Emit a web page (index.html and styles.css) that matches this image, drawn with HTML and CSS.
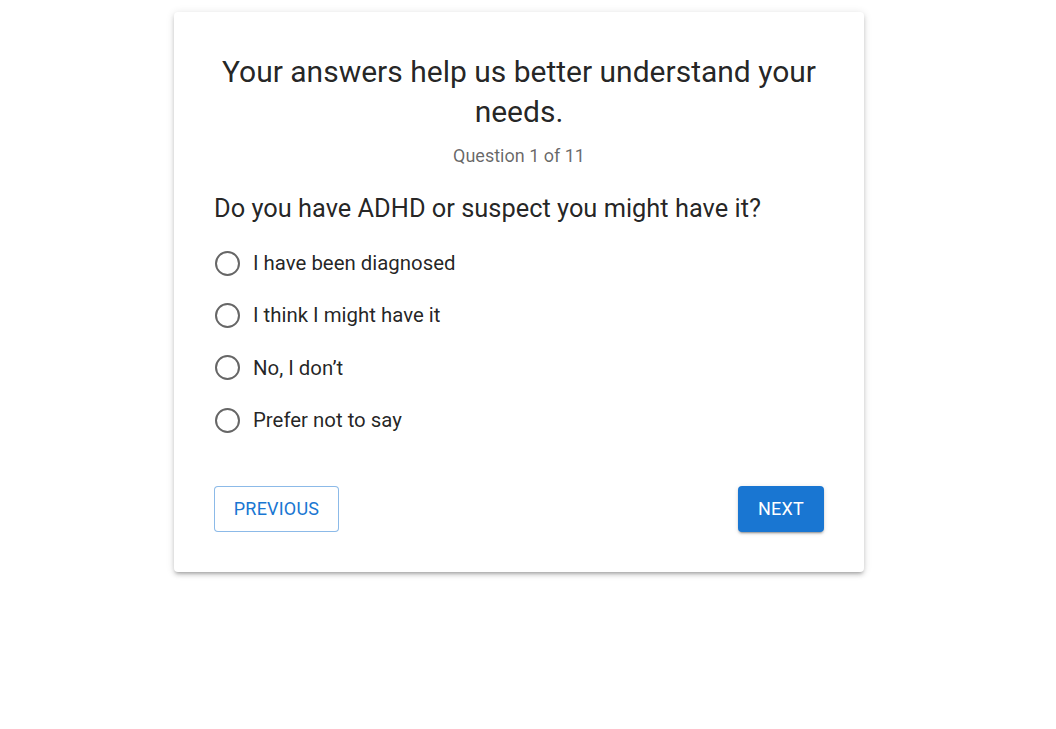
FILE: index.html
```html
<!DOCTYPE html>
<html>
<head>
<meta charset="utf-8">
<link rel="stylesheet" href="styles.css">
</head>
<body>
<div class="page">
  <div class="card">
    <h1 class="title">Your answers help us better understand your needs.</h1>
    <div class="counter">Question 1 of 11</div>
    <div class="question">Do you have ADHD or suspect you might have it?</div>
    <div class="options">
      <label class="option"><span class="radio"></span><span class="label">I have been diagnosed</span></label>
      <label class="option"><span class="radio"></span><span class="label">I think I might have it</span></label>
      <label class="option"><span class="radio"></span><span class="label">No, I don’t</span></label>
      <label class="option"><span class="radio"></span><span class="label">Prefer not to say</span></label>
    </div>
    <div class="actions">
      <button class="btn btn-outlined">PREVIOUS</button>
      <button class="btn btn-contained">NEXT</button>
    </div>
  </div>
</div>
</body>
</html>
```

FILE: styles.css
```css
* { box-sizing: border-box; }
html, body { margin: 0; padding: 0; background: #fff; }
body { font-family: Roboto, "Liberation Sans", sans-serif; color: rgba(0,0,0,0.87); }
.page { display: flex; justify-content: center; padding: 12px 18px 40px 0; }
.card {
  width: 690px;
  background: #fff;
  border-radius: 4px;
  padding: 40px;
  box-shadow: 0px 3px 3px -2px rgba(0,0,0,0.2), 0px 3px 4px 0px rgba(0,0,0,0.14), 0px 1px 8px 0px rgba(0,0,0,0.12);
}
.title {
  margin: 0;
  font-size: 30px;
  line-height: 40px;
  font-weight: 400;
  text-align: center;
}
.counter {
  margin-top: 12px;
  text-align: center;
  font-size: 18px;
  line-height: 24px;
  color: rgba(0,0,0,0.6);
}
.question {
  margin-top: 24px;
  font-size: 25.4px;
  line-height: 32px;
}
.options { margin-top: 13px; display: flex; flex-direction: column; }
.option { display: flex; align-items: center; height: 52.3px; }
.radio {
  width: 25px; height: 25px;
  border: 2.5px solid #666;
  border-radius: 50%;
  flex: none;
  margin-left: 1px;
}
.label { margin-left: 13px; font-size: 20.4px; line-height: 28px; }
.actions { margin-top: 40px; display: flex; justify-content: space-between; }
.btn {
  font-family: Roboto, "Liberation Sans", sans-serif;
  font-size: 18px;
  font-weight: 400;
  height: 46px;
  padding: 0 0 1px;
  border-radius: 4px;
  cursor: pointer;
  letter-spacing: 0.2px;
}
.btn-outlined {
  width: 125px;
  background: #fff;
  color: #1976d2;
  border: 1px solid rgba(25,118,210,0.5);
}
.btn-contained {
  width: 86px;
  background: #1976d2;
  color: #fff;
  border: none;
  box-shadow: 0px 3px 1px -2px rgba(0,0,0,0.2), 0px 2px 2px 0px rgba(0,0,0,0.14), 0px 1px 5px 0px rgba(0,0,0,0.12);
}
```
